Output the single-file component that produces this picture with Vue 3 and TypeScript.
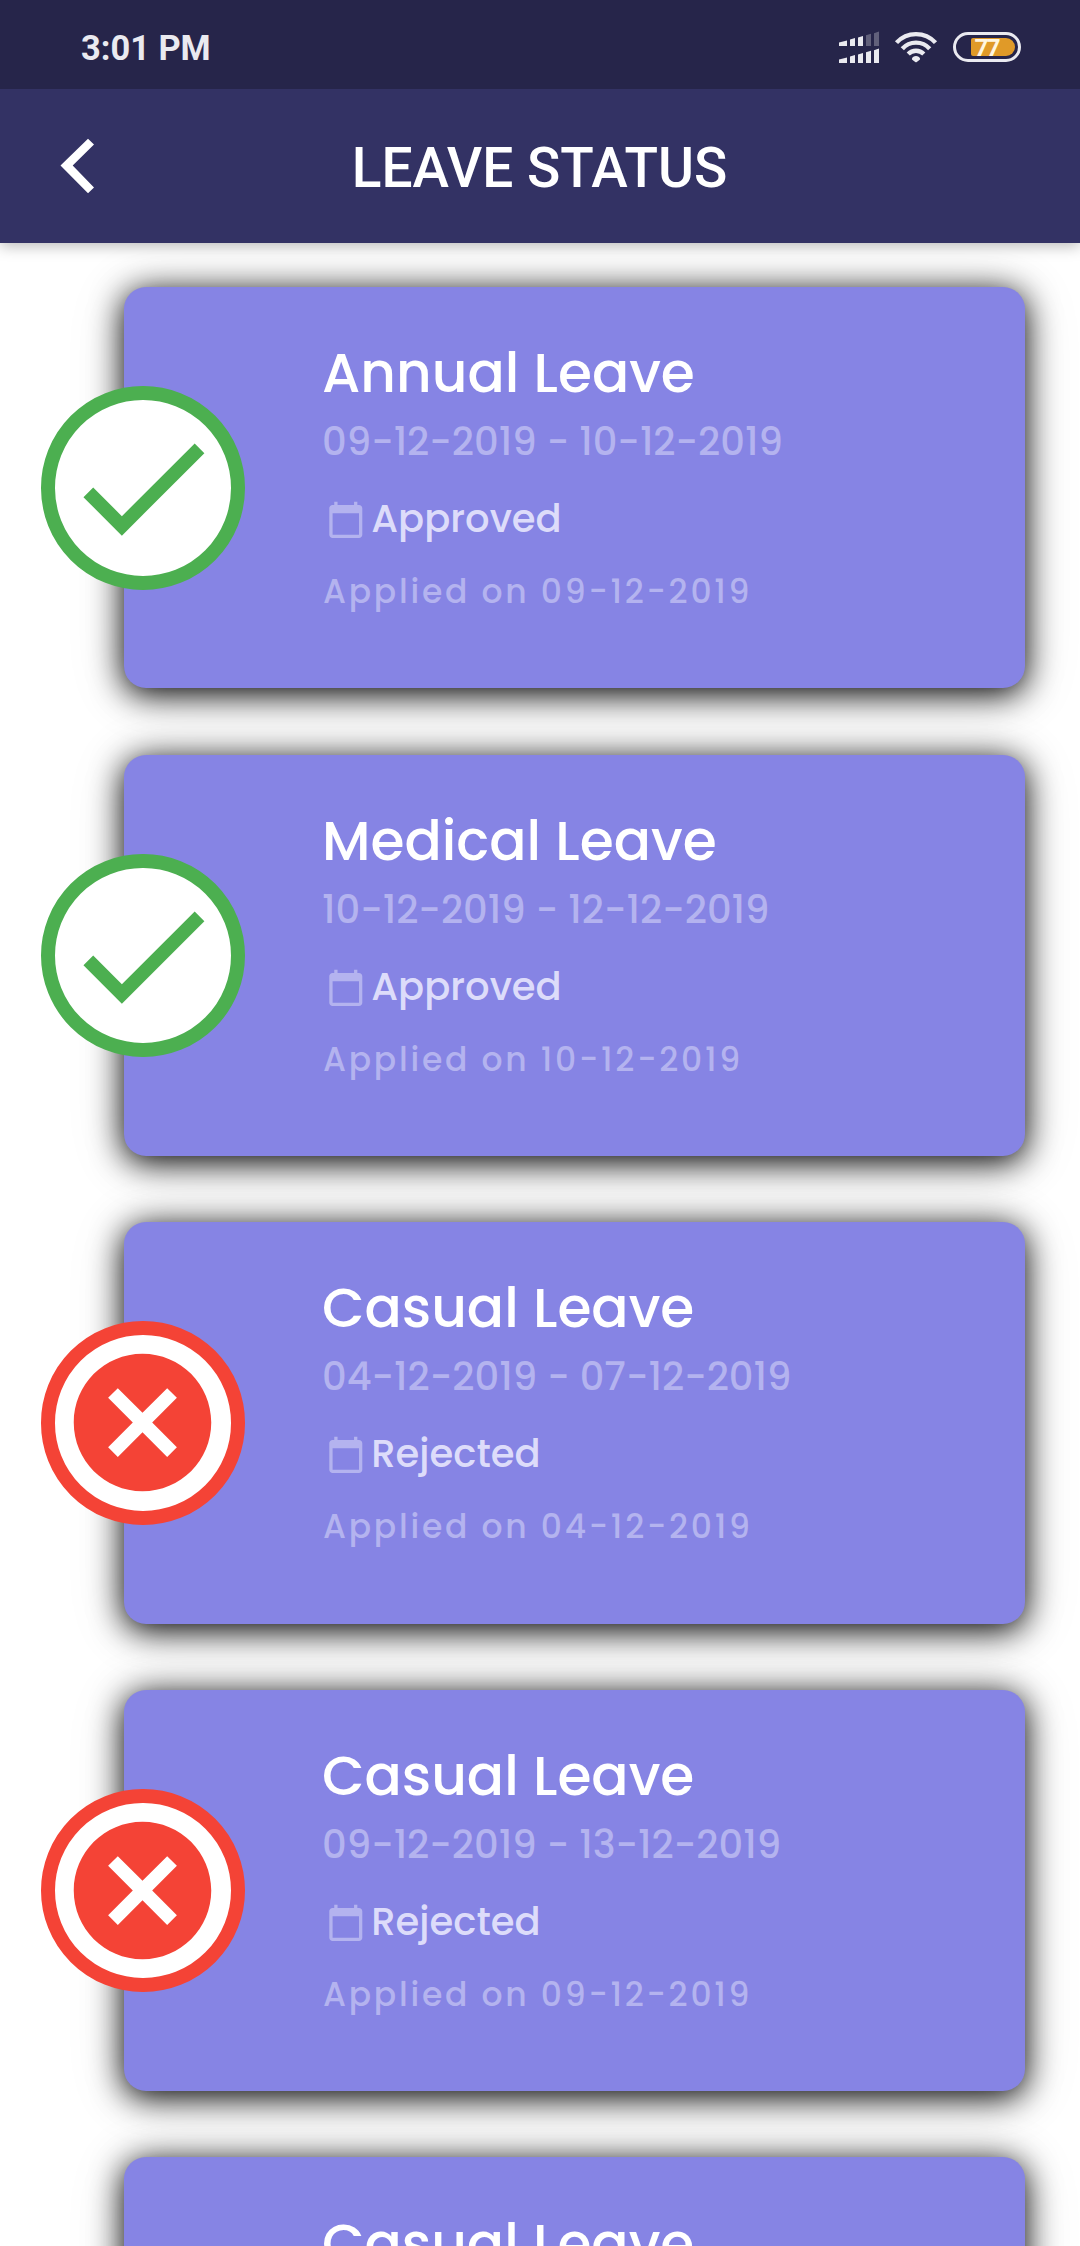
<script setup lang="ts">
type Status = 'Approved' | 'Rejected'

interface Leave {
  title: string
  from: string
  to: string
  status: Status
  appliedOn: string
}

const leaves: Leave[] = [
  { title: 'Annual Leave', from: '09-12-2019', to: '10-12-2019', status: 'Approved', appliedOn: '09-12-2019' },
  { title: 'Medical Leave', from: '10-12-2019', to: '12-12-2019', status: 'Approved', appliedOn: '10-12-2019' },
  { title: 'Casual Leave', from: '04-12-2019', to: '07-12-2019', status: 'Rejected', appliedOn: '04-12-2019' },
  { title: 'Casual Leave', from: '09-12-2019', to: '13-12-2019', status: 'Rejected', appliedOn: '09-12-2019' },
  { title: 'Casual Leave', from: '09-12-2019', to: '13-12-2019', status: 'Rejected', appliedOn: '09-12-2019' },
]
</script>

<template>
  <div class="screen">
    <header class="top">
      <div class="statusbar">
        <span class="time">3:01 PM</span>
        <svg class="indicators" width="190" height="40" viewBox="835 27 190 40">
          <g fill="#eaeaf0">
            <path d="M839 42.5l8-2V46h-8zM850 39.5l5-1.5v8h-5zM858 37.5l5-1.5v10h-5z" />
            <path d="M866 35.3l5-1.6V46h-5zM874 33.2l5-1.6V46h-5z" opacity=".3" />
            <path d="M839 59.5l8-2V63h-8zM850 56.5l5-1.5v8h-5zM858 54.5l5-1.5v10h-5zM866 52.3l5-1.6V63h-5zM874 50.2l5-1.6V63h-5z" />
            <path d="M916 56c2 0 3.600.9 4 2.400.2.800-.1 1.200-.6 1.700L916.800 62q-.8.500-1.600 0l-2.600-1.900c-.5-.5-.8-.9-.6-1.700.4-1.500 2-2.400 4-2.400z" />
          </g>
          <g fill="none" stroke="#eaeaf0" stroke-width="4.300">
            <path d="M896.500 42.600a26.500 26.500 0 0 1 39 0" />
            <path d="M902.300 48.800a18.300 18.300 0 0 1 27.400 0" />
            <path d="M908.200 54.100a10.800 10.800 0 0 1 15.600 0" />
          </g>
          <rect x="954.500" y="33.500" width="65" height="27" rx="13.500" fill="none" stroke="#eaeaf0" stroke-width="3" />
          <path d="M973 38h33a9 9 0 0 1 0 18h-33a2 2 0 0 1-2-2V40a2 2 0 0 1 2-2z" fill="#e09a28" />
          <text x="974.500" y="56" class="percent" textLength="26">77</text>
        </svg>
      </div>
      <div class="appbar">
        <svg class="back" width="36" height="56" viewBox="60 138 36 56">
          <path d="M88 138.700l6 5.800-21.300 21 21.300 22-6 5.800-27.500-27.800z" fill="#fff" />
        </svg>
        <h1>LEAVE STATUS</h1>
      </div>
    </header>

    <main class="list">
      <article v-for="(leave, i) in leaves" :key="i" class="card">
        <div class="badge" :class="leave.status.toLowerCase()">
          <svg width="165" height="165" viewBox="0 0 24 24" fill="currentColor">
            <path v-if="leave.status === 'Approved'" d="M9 16.170L4.830 12l-1.420 1.410L9 19 21 7l-1.410-1.410z" />
            <path v-else d="M12 2C6.470 2 2 6.470 2 12s4.470 10 10 10 10-4.470 10-10S17.530 2 12 2zm5 13.590L15.590 17 12 13.410 8.410 17 7 15.590 10.590 12 7 8.410 8.410 7 12 10.590 15.590 7 17 8.410 13.410 12 17 15.590z" />
          </svg>
        </div>
        <h2>{{ leave.title }}</h2>
        <p class="range">{{ leave.from }} - {{ leave.to }}</p>
        <p class="state">
          <svg width="39.600" height="39.600" viewBox="0 0 24 24" fill="#b4b3ef">
            <path d="M20 3h-1V1h-2v2H7V1H5v2H4c-1.100 0-2 .9-2 2v16c0 1.100.9 2 2 2h16c1.100 0 2-.9 2-2V5c0-1.100-.9-2-2-2zm0 18H4V8h16v13z" />
          </svg>
          <span>{{ leave.status }}</span>
        </p>
        <p class="applied">Applied on {{ leave.appliedOn }}</p>
      </article>
    </main>
  </div>
</template>

<style>
body {
  margin: 0;
  overflow: hidden;
}
</style>

<style scoped>
.screen {
  width: 1080px;
  height: 2246px;
  overflow: hidden;
  background: #fff;
  font-family: Poppins, Inter, sans-serif;
}
.top {
  position: relative;
  z-index: 2;
  font-family: Roboto, sans-serif;
  color: #fff;
  box-shadow: 0 3px 14px rgba(0, 0, 0, 0.28);
}
.statusbar {
  display: flex;
  justify-content: space-between;
  align-items: flex-start;
  box-sizing: border-box;
  height: 89px;
  padding: 27px 55px 0 81px;
  background: #26254a;
}
.time {
  font-size: 34.4px;
  line-height: 42px;
  font-weight: 700;
  color: #eaeaf0;
  white-space: nowrap;
}
.indicators {
  display: block;
}
.percent {
  font: 700 24.5px Roboto, sans-serif;
  fill: #fff6e0;
}
.appbar {
  display: grid;
  grid-template-columns: 1fr auto 1fr;
  align-items: center;
  height: 154px;
  background: #333264;
}
.back {
  margin-left: 60px;
}
h1 {
  margin: 3px 0 0 -1px;
  font-size: 55px;
  line-height: 66px;
  font-weight: 500;
  white-space: nowrap;
}
.list {
  display: flex;
  flex-direction: column;
  gap: 66.2px;
  padding: 44px 55px 0 124px;
}
.card {
  position: relative;
  box-sizing: border-box;
  flex: none;
  height: 401.4px;
  padding: 56.2px 0 0 198px;
  border-radius: 22px;
  background: #8684e4;
  box-shadow: 0 5.5px 33px #000, 0 5.5px 60px rgba(0, 0, 0, 0.13);
  white-space: nowrap;
}
.badge {
  position: absolute;
  left: -83px;
  top: 99px;
  display: grid;
  place-items: center;
  box-sizing: border-box;
  width: 203.5px;
  height: 203.5px;
  border: 14px solid currentColor;
  border-radius: 50%;
  background: #fff;
}
.badge svg {
  margin: -20px;
}
.approved {
  color: #4caf50;
}
.rejected {
  color: #f44336;
}
h2,
p {
  margin: 0;
  font-weight: 500;
}
h2 {
  font-size: 55px;
  line-height: 60px;
  color: #fff;
}
.range {
  margin-top: 13.8px;
  font-size: 38.5px;
  line-height: 50px;
  color: #b4b3ef;
}
.state {
  display: flex;
  margin-top: 27.3px;
  padding-left: 4.2px;
  font-size: 38.5px;
  line-height: 50px;
  color: #dddcfa;
}
.state svg {
  margin: 5.7px 5.5px 0 0;
}
.applied {
  margin: 27.9px 0 0 1px;
  font-size: 33px;
  line-height: 40px;
  letter-spacing: 2.75px;
  color: #b4b3ef;
}
</style>
